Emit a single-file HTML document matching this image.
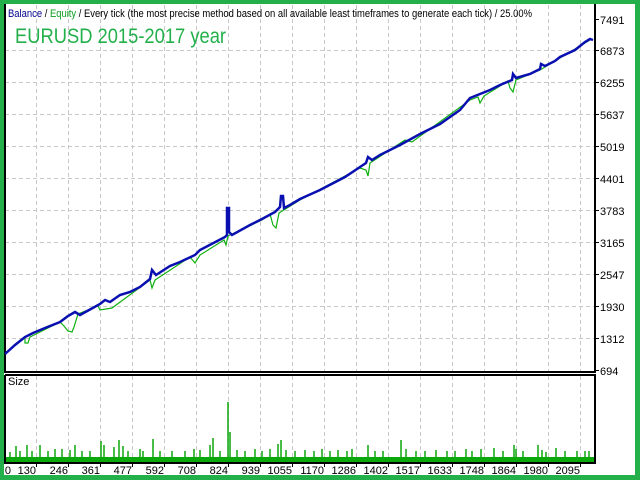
<!DOCTYPE html>
<html><head><meta charset="utf-8"><style>
html,body{margin:0;padding:0;width:640px;height:480px;overflow:hidden;background:#23b04b}
svg{display:block}
text{font-family:"Liberation Sans","DejaVu Sans",sans-serif;font-size:11px;fill:#000}
</style></head><body>
<svg width="640" height="480" viewBox="0 0 640 480" xmlns="http://www.w3.org/2000/svg">
<rect x="0" y="0" width="640" height="480" fill="#23b04b"/>
<rect x="4" y="4" width="631" height="471" fill="#fff"/>
<g stroke="#c8c8c8" stroke-width="1" stroke-dasharray="4,3">
<line x1="36.5" y1="5" x2="36.5" y2="463"/><line x1="68.5" y1="5" x2="68.5" y2="463"/><line x1="100.5" y1="5" x2="100.5" y2="463"/><line x1="132.5" y1="5" x2="132.5" y2="463"/><line x1="164.5" y1="5" x2="164.5" y2="463"/><line x1="196.5" y1="5" x2="196.5" y2="463"/><line x1="228.5" y1="5" x2="228.5" y2="463"/><line x1="260.5" y1="5" x2="260.5" y2="463"/><line x1="292.5" y1="5" x2="292.5" y2="463"/><line x1="324.5" y1="5" x2="324.5" y2="463"/><line x1="356.5" y1="5" x2="356.5" y2="463"/><line x1="388.5" y1="5" x2="388.5" y2="463"/><line x1="420.5" y1="5" x2="420.5" y2="463"/><line x1="452.5" y1="5" x2="452.5" y2="463"/><line x1="484.5" y1="5" x2="484.5" y2="463"/><line x1="516.5" y1="5" x2="516.5" y2="463"/><line x1="548.5" y1="5" x2="548.5" y2="463"/><line x1="580.5" y1="5" x2="580.5" y2="463"/>
<line x1="5" y1="50.5" x2="595" y2="50.5"/><line x1="5" y1="82.5" x2="595" y2="82.5"/><line x1="5" y1="114.5" x2="595" y2="114.5"/><line x1="5" y1="146.5" x2="595" y2="146.5"/><line x1="5" y1="178.5" x2="595" y2="178.5"/><line x1="5" y1="210.5" x2="595" y2="210.5"/><line x1="5" y1="242.5" x2="595" y2="242.5"/><line x1="5" y1="274.5" x2="595" y2="274.5"/><line x1="5" y1="306.5" x2="595" y2="306.5"/><line x1="5" y1="338.5" x2="595" y2="338.5"/>
</g>
<g fill="none" stroke="#000" stroke-width="2">
<polyline points="5,4 5,372 595,372 595,4"/>
<polyline points="5,375 5,463 595,463 595,375 5,375"/>
</g>
<text x="8" y="17" textLength="524" lengthAdjust="spacingAndGlyphs"><tspan fill="#00008b">Balance</tspan> / <tspan fill="#0a9e1e">Equity</tspan> / Every tick (the most precise method based on all available least timeframes to generate each tick) / 25.00%</text>
<text x="15" y="43" textLength="211" lengthAdjust="spacingAndGlyphs" style="font-size:21px;fill:#23b04b">EURUSD 2015-2017 year</text>
<polyline fill="none" stroke="#10b010" stroke-width="1.2" points="25,336 25,343 28,343 30,337 60,322 64,326 68,331 72,332 74,327 78,314 98,306 100,310 112,308 150,280 152,288 155,280 190,257 195,263 200,255 224,240 226,245 228,236 262,220 270,214 273,225 276,228 279,213 300,200 360,168 366,170 368,176 370,163 405,140 412,142 470,100 478,97 480,103 484,96 508,81 510,88 513,92 516,80 540,70 560,58 590,40"/>
<polyline fill="none" stroke="#0a10b0" stroke-width="2.5" points="5,354 15,345 25,337 33,333 45,328 60,322 68,316 75,312 80,315 100,304 105,300 110,302 120,295 130,292 140,287 150,279 152,270 156,275 170,266 180,262 195,255 200,250 225,237 227,235 227,208 229,208 229,232 232,235 250,225 262,219 275,212 280,207 281,196 283,196 284,208 290,205 300,199 320,190 345,177 366,163 368,157 372,160 380,155 400,145 420,134 440,124 460,110 470,98 490,90 500,85 512,80 513,74 516,78 530,74 540,69 541,64 545,66 555,61 560,57 575,50 585,42 590,39 593,40"/>
<text x="8" y="385">Size</text>
<rect x="6" y="457" width="588" height="5" fill="#0aa80a"/>
<g stroke="#0aa80a" stroke-width="1.5">
<line x1="10" y1="457" x2="10" y2="452"/><line x1="16" y1="457" x2="16" y2="446"/><line x1="20" y1="457" x2="20" y2="451"/><line x1="27" y1="457" x2="27" y2="445"/><line x1="32" y1="457" x2="32" y2="451"/><line x1="40" y1="457" x2="40" y2="445"/><line x1="48" y1="457" x2="48" y2="451"/><line x1="55" y1="457" x2="55" y2="449"/><line x1="62" y1="457" x2="62" y2="449"/><line x1="70" y1="457" x2="70" y2="450"/><line x1="75" y1="457" x2="75" y2="445"/><line x1="82" y1="457" x2="82" y2="451"/><line x1="90" y1="457" x2="90" y2="451"/><line x1="101" y1="457" x2="101" y2="441"/><line x1="104" y1="457" x2="104" y2="445"/><line x1="114" y1="457" x2="114" y2="447"/><line x1="119" y1="457" x2="119" y2="440"/><line x1="123" y1="457" x2="123" y2="446"/><line x1="128" y1="457" x2="128" y2="451"/><line x1="140" y1="457" x2="140" y2="449"/><line x1="143" y1="457" x2="143" y2="451"/><line x1="153" y1="457" x2="153" y2="439"/><line x1="160" y1="457" x2="160" y2="451"/><line x1="172" y1="457" x2="172" y2="451"/><line x1="185" y1="457" x2="185" y2="451"/><line x1="194" y1="457" x2="194" y2="449"/><line x1="200" y1="457" x2="200" y2="450"/><line x1="210" y1="457" x2="210" y2="445"/><line x1="213" y1="457" x2="213" y2="438"/><line x1="220" y1="457" x2="220" y2="451"/><line x1="228" y1="457" x2="228" y2="402"/><line x1="230" y1="457" x2="230" y2="432"/><line x1="237" y1="457" x2="237" y2="450"/><line x1="245" y1="457" x2="245" y2="451"/><line x1="255" y1="457" x2="255" y2="449"/><line x1="262" y1="457" x2="262" y2="451"/><line x1="270" y1="457" x2="270" y2="449"/><line x1="278" y1="457" x2="278" y2="444"/><line x1="281" y1="457" x2="281" y2="440"/><line x1="286" y1="457" x2="286" y2="450"/><line x1="295" y1="457" x2="295" y2="451"/><line x1="305" y1="457" x2="305" y2="450"/><line x1="314" y1="457" x2="314" y2="451"/><line x1="322" y1="457" x2="322" y2="449"/><line x1="330" y1="457" x2="330" y2="451"/><line x1="338" y1="457" x2="338" y2="450"/><line x1="347" y1="457" x2="347" y2="451"/><line x1="352" y1="457" x2="352" y2="449"/><line x1="368" y1="457" x2="368" y2="445"/><line x1="375" y1="457" x2="375" y2="451"/><line x1="383" y1="457" x2="383" y2="451"/><line x1="401" y1="457" x2="401" y2="440"/><line x1="406" y1="457" x2="406" y2="449"/><line x1="416" y1="457" x2="416" y2="451"/><line x1="425" y1="457" x2="425" y2="451"/><line x1="436" y1="457" x2="436" y2="450"/><line x1="447" y1="457" x2="447" y2="451"/><line x1="455" y1="457" x2="455" y2="451"/><line x1="466" y1="457" x2="466" y2="449"/><line x1="472" y1="457" x2="472" y2="451"/><line x1="481" y1="457" x2="481" y2="449"/><line x1="494" y1="457" x2="494" y2="448"/><line x1="503" y1="457" x2="503" y2="451"/><line x1="514" y1="457" x2="514" y2="445"/><line x1="516" y1="457" x2="516" y2="449"/><line x1="523" y1="457" x2="523" y2="451"/><line x1="538" y1="457" x2="538" y2="445"/><line x1="542" y1="457" x2="542" y2="450"/><line x1="546" y1="457" x2="546" y2="452"/><line x1="556" y1="457" x2="556" y2="448"/><line x1="565" y1="457" x2="565" y2="451"/><line x1="577" y1="457" x2="577" y2="451"/><line x1="585" y1="457" x2="585" y2="451"/><line x1="589" y1="457" x2="589" y2="451"/>
</g>
<g stroke="#000" stroke-width="1">
<line x1="36.5" y1="463" x2="36.5" y2="467"/><line x1="68.5" y1="463" x2="68.5" y2="467"/><line x1="100.5" y1="463" x2="100.5" y2="467"/><line x1="132.5" y1="463" x2="132.5" y2="467"/><line x1="164.5" y1="463" x2="164.5" y2="467"/><line x1="196.5" y1="463" x2="196.5" y2="467"/><line x1="228.5" y1="463" x2="228.5" y2="467"/><line x1="260.5" y1="463" x2="260.5" y2="467"/><line x1="292.5" y1="463" x2="292.5" y2="467"/><line x1="324.5" y1="463" x2="324.5" y2="467"/><line x1="356.5" y1="463" x2="356.5" y2="467"/><line x1="388.5" y1="463" x2="388.5" y2="467"/><line x1="420.5" y1="463" x2="420.5" y2="467"/><line x1="452.5" y1="463" x2="452.5" y2="467"/><line x1="484.5" y1="463" x2="484.5" y2="467"/><line x1="516.5" y1="463" x2="516.5" y2="467"/><line x1="548.5" y1="463" x2="548.5" y2="467"/><line x1="580.5" y1="463" x2="580.5" y2="467"/>
<line x1="595" y1="19.5" x2="599" y2="19.5"/><line x1="595" y1="50.5" x2="599" y2="50.5"/><line x1="595" y1="82.5" x2="599" y2="82.5"/><line x1="595" y1="114.5" x2="599" y2="114.5"/><line x1="595" y1="146.5" x2="599" y2="146.5"/><line x1="595" y1="178.5" x2="599" y2="178.5"/><line x1="595" y1="210.5" x2="599" y2="210.5"/><line x1="595" y1="242.5" x2="599" y2="242.5"/><line x1="595" y1="274.5" x2="599" y2="274.5"/><line x1="595" y1="306.5" x2="599" y2="306.5"/><line x1="595" y1="338.5" x2="599" y2="338.5"/><line x1="595" y1="370.5" x2="599" y2="370.5"/>
</g>
<g>
<text x="600" y="24">7491</text><text x="600" y="55">6873</text><text x="600" y="87">6255</text><text x="600" y="119">5637</text><text x="600" y="151">5019</text><text x="600" y="183">4401</text><text x="600" y="215">3783</text><text x="600" y="247">3165</text><text x="600" y="279">2547</text><text x="600" y="311">1930</text><text x="600" y="343">1312</text><text x="600" y="375">694</text>
</g>
<g text-anchor="end">
<text x="11" y="474">0</text><text x="36" y="474">130</text><text x="68" y="474">246</text><text x="100" y="474">361</text><text x="132" y="474">477</text><text x="164" y="474">592</text><text x="196" y="474">708</text><text x="228" y="474">824</text><text x="260" y="474">939</text><text x="292" y="474">1055</text><text x="324" y="474">1170</text><text x="356" y="474">1286</text><text x="388" y="474">1402</text><text x="420" y="474">1517</text><text x="452" y="474">1633</text><text x="484" y="474">1748</text><text x="516" y="474">1864</text><text x="548" y="474">1980</text><text x="580" y="474">2095</text>
</g>
</svg>
</body></html>
